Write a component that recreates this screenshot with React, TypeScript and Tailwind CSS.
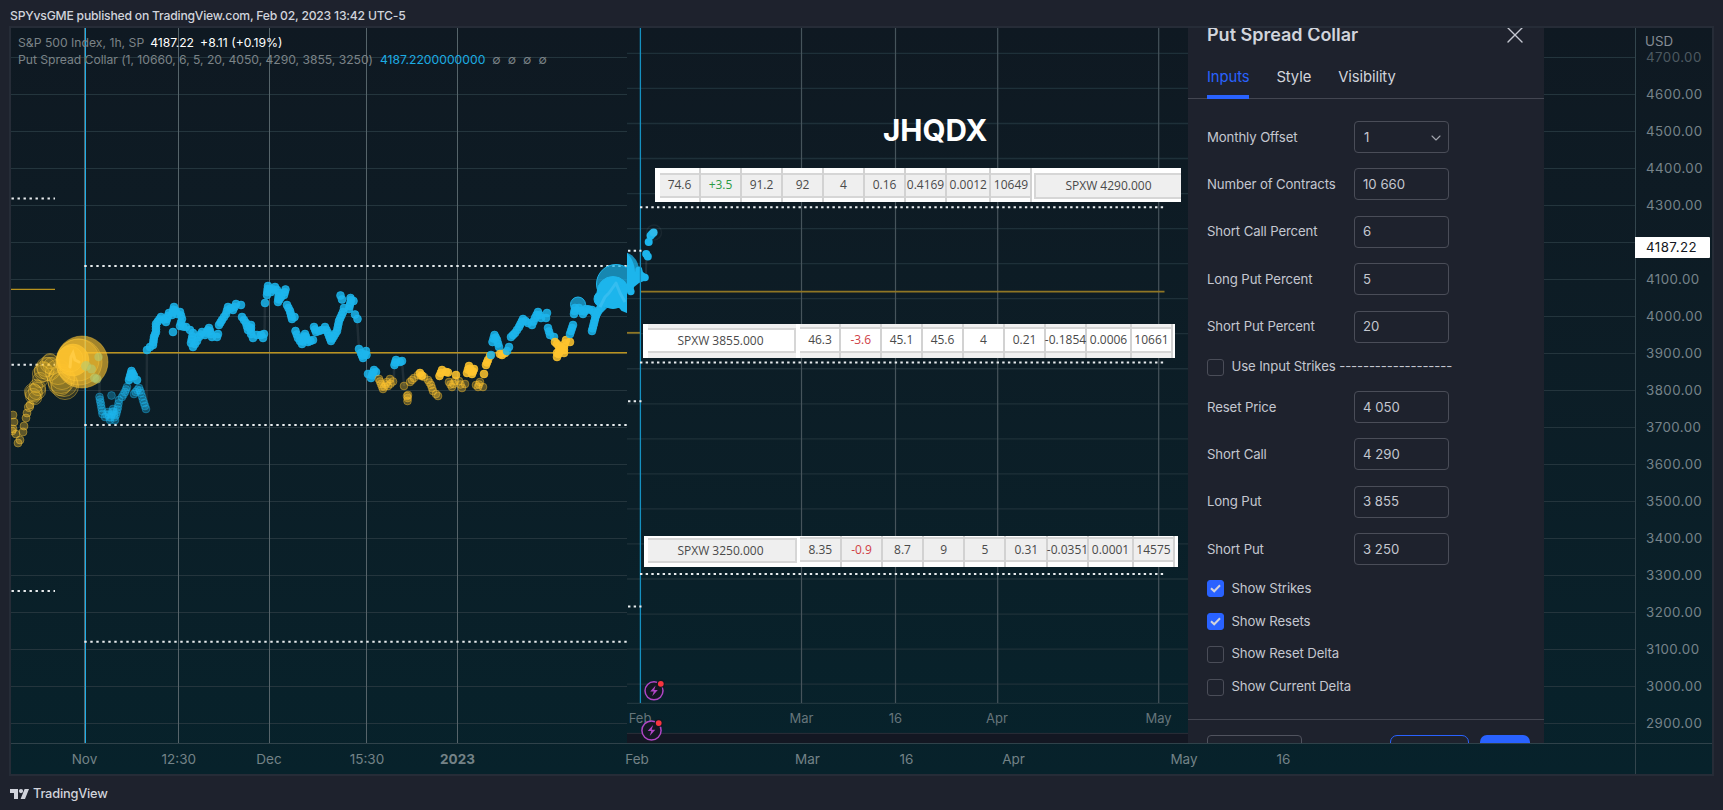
import React from 'react';
import { FiX, FiChevronDown } from 'react-icons/fi';

type Point = [number, number];
type Tone = 'blue' | 'gold';

interface Run {
  tone: Tone;
  dim?: boolean;
  points: Point[];
}

interface StrikeCell {
  value: string;
  width: string;
  color?: string;
}

const TONES: Record<Tone, string> = { blue: '#1cb5ec', gold: '#ffc42e' };

const RUNS: Run[] = [
  { tone: 'blue', dim: true, points: [[99.5, 397], [101, 405], [102.5, 414], [105, 417], [108, 412], [110, 420], [113, 409], [115, 420], [116, 415], [118, 407], [119, 400], [122, 397], [125, 392], [127, 387]] },
  { tone: 'blue', dim: true, points: [[111.5, 395.5]] },
  { tone: 'blue', points: [[129, 380], [131.5, 371], [134, 376], [137, 380]] },
  { tone: 'blue', dim: true, points: [[134, 394], [139, 388], [141, 393], [143, 400], [145, 406], [146, 409]] },
  { tone: 'blue', points: [[147, 350], [150, 347], [153, 345], [154, 337], [156, 332], [156, 324], [161, 317], [166, 322], [169, 313], [172, 315], [174, 307], [177, 314], [180, 312], [182, 319], [180, 326], [186, 327], [190, 330], [193, 333], [191, 343], [193, 347], [197, 341], [199, 337], [202, 332], [205, 335], [209, 328], [212, 337], [217, 337], [218, 334]] },
  { tone: 'blue', points: [[173, 332]] },
  { tone: 'blue', points: [[219, 325], [222, 320], [226, 314], [228, 307], [233, 310], [236, 304], [241, 305]] },
  { tone: 'blue', points: [[242, 317], [246, 323], [248, 330], [251, 325], [251, 334], [253, 338], [257, 335], [261, 335], [263, 338], [264, 334]] },
  { tone: 'blue', points: [[265, 303]] },
  { tone: 'blue', points: [[267, 295], [268, 286], [271, 292], [275, 287], [279, 293], [278, 302], [281, 297], [284, 295], [285.5, 289.5]] },
  { tone: 'blue', points: [[287, 305], [290, 311], [292, 319], [294.5, 317]] },
  { tone: 'blue', points: [[295.5, 331], [298, 338], [302, 344], [305, 334], [308, 342], [313, 340]] },
  { tone: 'blue', points: [[314, 327], [316, 332], [322, 330], [325, 327], [328, 333], [331, 341], [337, 331], [339, 321], [343, 312], [344, 308], [349, 309], [351, 300]] },
  { tone: 'blue', points: [[340.5, 295.5], [342, 299.5]] },
  { tone: 'blue', points: [[350.5, 298], [353.5, 301]] },
  { tone: 'blue', points: [[355, 314.5], [357.5, 319]] },
  { tone: 'blue', points: [[359, 349], [361, 353], [363, 358], [366, 351], [366.5, 355]] },
  { tone: 'blue', points: [[368, 374], [371, 378], [374, 370], [376, 372]] },
  { tone: 'gold', dim: true, points: [[379, 379], [381, 384], [383, 389], [387, 382], [390, 379], [393, 381.5], [388, 386]] },
  { tone: 'blue', points: [[394.5, 365], [396, 360], [400, 362], [402, 361]] },
  { tone: 'gold', dim: true, points: [[404, 386]] },
  { tone: 'gold', dim: true, points: [[407, 396], [408, 395], [407.5, 401]] },
  { tone: 'gold', dim: true, points: [[410, 382], [414, 378], [418, 375], [424, 377], [428, 380], [431, 385], [433, 391], [436, 394], [438, 396]] },
  { tone: 'gold', points: [[420, 373], [422, 375.5]] },
  { tone: 'gold', points: [[439.5, 376], [442, 370], [446, 372], [448, 372.5]] },
  { tone: 'gold', dim: true, points: [[449, 382], [452, 387], [455, 381], [459, 381], [462, 388], [465, 384]] },
  { tone: 'gold', points: [[456, 375]] },
  { tone: 'gold', points: [[467, 373], [469, 366], [472, 374], [474, 369]] },
  { tone: 'gold', dim: true, points: [[476, 385], [480, 382], [478, 387], [483, 387]] },
  { tone: 'gold', points: [[484, 374]] },
  { tone: 'gold', points: [[486, 365], [488, 360], [490, 356]] },
  { tone: 'blue', points: [[491, 355]] },
  { tone: 'blue', points: [[492.5, 342], [494.5, 335], [497, 340], [499, 347]] },
  { tone: 'gold', points: [[500, 354], [502, 355], [505, 353]] },
  { tone: 'blue', points: [[507, 351], [509, 347]] },
  { tone: 'blue', points: [[511, 337], [515, 333], [519, 327], [523, 319], [528, 323], [532, 325], [535, 318], [538, 312], [541, 318], [546, 318], [547, 313]] },
  { tone: 'blue', points: [[548, 328], [550, 335], [554, 337]] },
  { tone: 'gold', points: [[555, 342], [561, 348], [557, 353], [557, 357], [560, 351], [564, 353], [564, 347], [566, 340], [570, 342]] },
  { tone: 'blue', points: [[570, 334], [573, 325]] },
  { tone: 'blue', points: [[574, 314], [575, 308], [579, 308], [583, 314], [586, 309], [592, 310], [596, 315]] },
  { tone: 'blue', points: [[592, 331], [594, 323], [596, 315], [599, 310], [603, 306]] },
];

// [cx, cy, r] of the October bubbles that grow towards the reset
const GOLD_BUBBLES: [number, number, number][] = [
  [13, 415, 4.4], [14, 422, 4.4], [12, 431, 4.4], [13, 429, 4.4], [16, 434, 4.4], [18, 443, 4.4], [20, 440, 4.4], [23, 432, 4.4], [24, 426, 4.4],
  [26, 418, 4.4], [27, 413, 4.4], [29, 407, 5], [30, 405, 4.4], [33, 396, 8], [34, 393, 9], [37, 391, 9], [38, 388, 8], [36, 386, 7],
  [35, 398, 7], [33, 392, 9], [40, 380, 8], [41, 374, 9], [43, 370, 9], [44, 372, 10], [46, 367, 10], [50, 361, 8], [50, 364, 10], [49, 369, 12],
  [52, 366, 9], [58, 372, 13], [61, 380, 14], [64, 383, 14], [65, 386, 14], [62, 377, 13], [60, 384, 12],
];

const HORIZONTAL = Array.from({ length: 19 }, (_, i) => 57.5 + i * 37);
const INSET_HORIZONTAL = Array.from({ length: 19 }, (_, i) => 53.4 + i * 35.04);
const PRICES = Array.from({ length: 19 }, (_, i) => `${4700 - i * 100}.00`);

// Fills the gaps between two samples so that a run reads as a bead chain
const densify = (points: Point[]): Point[] => {
  const out: Point[] = [];
  points.forEach(([x, y], i) => {
    out.push([x, y]);
    const next = points[i + 1];
    if (!next) return;
    const steps = Math.floor(Math.hypot(next[0] - x, next[1] - y) / 2.6);
    for (let s = 1; s < steps; s++) {
      out.push([x + ((next[0] - x) * s) / steps, y + ((next[1] - y) * s) / steps]);
    }
  });
  return out;
};

const DottedLine: React.FC<{ x1: number; x2: number; y: number; step?: number }> = ({ x1, x2, y, step = 6 }) => (
  <line x1={x1} x2={x2} y1={y} y2={y} stroke="#e9edef" strokeWidth={2} strokeDasharray={`2.4 ${step - 2.4}`} />
);

const Beads: React.FC<{ run: Run }> = ({ run }) => (
  <g fill={TONES[run.tone]} stroke={TONES[run.tone]}>
    {densify(run.points).map(([x, y], i) => (
      <circle
        key={i}
        cx={x}
        cy={y}
        r={3.9}
        fillOpacity={run.dim ? 0.34 : 0.85}
        strokeOpacity={run.dim ? 0.4 : 0.7}
        strokeWidth={1}
      />
    ))}
  </g>
);

const MainChart: React.FC = () => (
  <svg className="absolute inset-0 h-full w-full" viewBox="11 28 1624 715">
    <g stroke="#24353d" strokeWidth={1}>
      {HORIZONTAL.map((y) => <line key={y} x1={11} x2={1635} y1={y} y2={y} />)}
    </g>
    <g stroke="#56646a" strokeWidth={1}>
      {[84.5, 178.5, 269.5, 366.5, 457.5].map((x) => <line key={x} x1={x} x2={x} y1={28} y2={743} />)}
    </g>
    <line x1={85.5} x2={85.5} y1={28} y2={743} stroke="#1eaee6" />

    <g stroke="#ffffff" strokeOpacity={0.08} strokeWidth={2.5}>
      <line x1={99.5} x2={99.5} y1={357} y2={397} />
      <line x1={146.5} x2={147} y1={409} y2={350} />
      <line x1={264.5} x2={265} y1={334} y2={303} />
      <line x1={357} x2={359} y1={319} y2={349} />
      <line x1={402} x2={404} y1={361} y2={386} />
      <line x1={394} x2={394} y1={382} y2={365} />
    </g>

    <g stroke="#b9921f" strokeWidth={1.4}>
      <line x1={11} x2={55} y1={289.4} y2={289.4} />
      <line x1={85} x2={627} y1={352.7} y2={352.7} />
    </g>
    <DottedLine x1={11.5} x2={55} y={198.5} />
    <DottedLine x1={11.5} x2={55} y={364.7} />
    <DottedLine x1={11.5} x2={55} y={591} />
    <DottedLine x1={84.3} x2={627} y={266} />
    <DottedLine x1={84.3} x2={627} y={425} />
    <DottedLine x1={84.3} x2={627} y={641.7} />

    <g fill="#ffc42e" stroke="#ffca3a" strokeOpacity={0.4} strokeWidth={1}>
      {GOLD_BUBBLES.map(([x, y, r], i) => (
        <circle key={i} cx={x} cy={y} r={r - 0.4} fillOpacity={r > 6 ? 0.14 : 0.34} />
      ))}
      <circle cx={82} cy={362} r={26} fillOpacity={0.62} />
      <circle cx={79} cy={362} r={23} fillOpacity={0.3} />
      <circle cx={78} cy={360} r={21} fillOpacity={0.3} />
      <circle cx={73} cy={360} r={16} fillOpacity={0.75} />
      <circle cx={70} cy={359} r={13} fillOpacity={0.4} />
    </g>
    <path d="M70 367L71 357L73 353L75 360L79 362" fill="none" stroke="#ffcb42" strokeWidth={3} strokeLinecap="round" />
    <g fill="#b4cb72" fillOpacity={0.6}>
      <circle cx={98.5} cy={357} r={4.2} />
      <circle cx={86} cy={366} r={5} />
      <circle cx={91.5} cy={369} r={4.5} />
      <circle cx={94.5} cy={378} r={4.5} />
      <circle cx={97} cy={379} r={4.5} />
    </g>

    {RUNS.map((run, i) => <Beads key={i} run={run} />)}

    <g fill="#1cb5ec" stroke="#1cb5ec">
      <circle cx={578} cy={304.5} r={7.5} fillOpacity={0.7} />
      <circle cx={616} cy={284} r={19.5} fillOpacity={0.7} />
      <circle cx={613} cy={292.5} r={16} />
      <circle cx={602} cy={299} r={8} />
      <circle cx={621} cy={300} r={8} />
      <path d="M610 290L627 285V312L622 310L617 303L606 306Z" strokeWidth={2} />
    </g>
    <path d="M600 307L605 297L609 293L616 283L620 293L625 302" fill="none" stroke="#35bdf0" strokeWidth={3} strokeLinejoin="round" />
  </svg>
);

const LightningBadge: React.FC<{ x: number; y: number; r: number }> = ({ x, y, r }) => (
  <g>
    <circle cx={x} cy={y} r={r - 1} fill="#131722" stroke="#b046c6" strokeWidth={1.5} />
    <path
      d={`M${x + 1.6} ${y - 5.4}L${x - 3.8} ${y + 0.6}H${x - 0.2}L${x - 1.8} ${y + 5.4}L${x + 3.8} ${y - 0.8}H${x + 0.2}Z`}
      fill="#b046c6"
    />
    <circle cx={x + r * 0.68} cy={y - r * 0.7} r={4} fill="#131722" />
    <circle cx={x + r * 0.68} cy={y - r * 0.7} r={2.9} fill="#f7353f" />
  </g>
);

const InsetChart: React.FC = () => (
  <svg className="absolute inset-0 h-full w-full" viewBox="627 28 561 715">
    <g stroke="#1e3039" strokeWidth={1.3}>
      {INSET_HORIZONTAL.map((y) => <line key={y} x1={627} x2={1188} y1={y} y2={y} />)}
      <line x1={627} x2={1188} y1={703.3} y2={703.3} stroke="#20363e" />
    </g>
    <g stroke="#46545b" strokeWidth={1.2}>
      {[801.5, 895.5, 997.7, 1158.7].map((x) => <line key={x} x1={x} x2={x} y1={28} y2={703} />)}
    </g>
    <rect x={627} y={733} width={561} height={10} fill="#131722" />
    <line x1={627} x2={1188} y1={733.4} y2={733.4} stroke="#2a2e39" />

    <g stroke="#8f7624" strokeWidth={1.8}>
      <line x1={640} x2={1164.5} y1={291.7} y2={291.7} />
      <line x1={627} x2={641} y1={332.8} y2={332.8} />
    </g>

    <line x1={646} x2={646.5} y1={276} y2={250} stroke="#ffffff" strokeOpacity={0.09} strokeWidth={2} />
    <g fill="#1cb5ec">
      <circle cx={620.5} cy={270} r={18.5} fillOpacity={0.75} />
      <path d="M627 253C633 259 635 267 635 272L638 267L641 267L643 272L647 275L648 279L644 281L639 283L634 287L633 294L630 295L627 291Z" />
      <circle cx={630.8} cy={291.5} r={3.8} />
      <circle cx={638.8} cy={270} r={3.5} />
      <circle cx={645} cy={277.5} r={3.8} />
      <circle cx={646.2} cy={254} r={4} />
      <circle cx={647.8} cy={256.5} r={4} />
      <circle cx={648.7} cy={242} r={4} />
      <circle cx={650.5} cy={235.7} r={4} />
      <circle cx={652} cy={234} r={4} />
      <circle cx={653.6} cy={232.5} r={4} fill="#2fb9ea" />
    </g>
    <circle cx={654} cy={232.5} r={7.5} fill="none" stroke="#ffffff" strokeOpacity={0.05} strokeWidth={1.5} />
    <line x1={640.4} x2={640.4} y1={28} y2={703} stroke="#1590c0" strokeWidth={1.3} />

    <DottedLine x1={628} x2={641.5} y={250.7} step={5.66} />
    <DottedLine x1={628} x2={641.5} y={401.2} step={5.66} />
    <DottedLine x1={628} x2={641.5} y={606.5} step={5.66} />
    <DottedLine x1={640} x2={1165} y={207.3} step={5.66} />
    <DottedLine x1={640} x2={1165} y={362.6} step={5.66} />
    <DottedLine x1={640} x2={1165} y={574} step={5.66} />

    <g className="text-[13px]" fill="#66757b" textAnchor="middle">
      <text x={640} y={722.5}>Feb</text>
      <text x={801.5} y={722.5}>Mar</text>
      <text x={895.5} y={722.5}>16</text>
      <text x={997} y={722.5}>Apr</text>
      <text x={1158.5} y={722.5}>May</text>
    </g>
    <LightningBadge x={654} y={690.8} r={10} />
    <LightningBadge x={651.5} y={730.5} r={10.6} />
  </svg>
);

const UPPER_CELLS: StrikeCell[] = [
  { value: '74.6', width: 'w-[41px]' },
  { value: '+3.5', width: 'w-[41px]', color: 'text-[#2c9a45]' },
  { value: '91.2', width: 'w-[41px]' },
  { value: '92', width: 'w-[41px]' },
  { value: '4', width: 'w-[41px]' },
  { value: '0.16', width: 'w-[41px]' },
  { value: '0.4169', width: 'w-[41px]' },
  { value: '0.0012', width: 'w-[44.5px]' },
  { value: '10649', width: 'w-[41px]' },
];

const MIDDLE_CELLS: StrikeCell[] = [
  { value: '46.3', width: 'w-[41px]' },
  { value: '-3.6', width: 'w-[40.5px]', color: 'text-[#cf4146]' },
  { value: '45.1', width: 'w-[41px]' },
  { value: '45.6', width: 'w-[41px]' },
  { value: '4', width: 'w-[41px]' },
  { value: '0.21', width: 'w-[41px]' },
  { value: '-0.1854', width: 'w-[41px]' },
  { value: '0.0006', width: 'w-[45px]' },
  { value: '10661', width: 'w-[41px]' },
];

const LOWER_CELLS: StrikeCell[] = [
  { value: '8.35', width: 'w-[41.5px]' },
  { value: '-0.9', width: 'w-[41px]', color: 'text-[#cf4146]' },
  { value: '8.7', width: 'w-[41px]' },
  { value: '9', width: 'w-[41.5px]' },
  { value: '5', width: 'w-[41px]' },
  { value: '0.31', width: 'w-[41.5px]' },
  { value: '-0.0351', width: 'w-[41px]' },
  { value: '0.0001', width: 'w-[45px]' },
  { value: '14575', width: 'w-[41px]' },
];

const StrikeCells: React.FC<{ cells: StrikeCell[]; outer: string; inner: string; pad: string }> = ({ cells, outer, inner, pad }) => (
  <div className="flex h-full">
    {cells.map((cell) => (
      <div key={cell.value} className={`h-full shrink-0 border-r-2 border-[#d2d2d2] ${pad} ${outer} ${cell.width}`}>
        <div className={`flex h-full items-center justify-center border-y-2 border-[#d6d6d6] pl-px whitespace-nowrap ${inner} ${cell.color ?? ''}`}>
          {cell.value}
        </div>
      </div>
    ))}
  </div>
);

const StrikeName: React.FC<{ name: string; className: string }> = ({ name, className }) => (
  <div className={`flex items-center justify-center border-y-2 border-[#d6d6d6] ${className}`}>{name}</div>
);

const Inset: React.FC = () => (
  <div className="relative h-full w-[561px] shrink-0 overflow-hidden bg-linear-to-b from-[#0f1922] to-[#07222b]">
    <InsetChart />
    <div className="absolute left-[256px] top-[82px] text-[29.7px] leading-[40px] font-bold text-white">JHQDX</div>

    <div className="absolute left-[28px] top-[140px] flex h-[33.5px] w-[526px] bg-white pl-[4.5px] font-['Open_Sans',sans-serif] text-[12px] text-[#4a4a4a]">
      <StrikeCells cells={UPPER_CELLS} outer="bg-[#fdfdfd]" inner="bg-[#efefef]" pad="pt-[4.5px] pb-[4px]" />
      <StrikeName name="SPXW 4290.000" className="mt-[5px] mb-[3px] ml-[2px] grow border-l-2 bg-[#efefef]" />
    </div>

    <div className="absolute left-[16px] top-[296px] flex h-[34px] w-[532px] bg-[#f0f0f0] font-['Open_Sans',sans-serif] text-[12px] text-[#4a4a4a]">
      <div className="w-[5px] shrink-0 bg-white" />
      <StrikeName name="SPXW 3855.000" className="mt-[4px] mb-[5px] w-[148px] shrink-0 border-r-2 bg-white pr-px" />
      <div className="w-[4px] shrink-0 bg-white" />
      <StrikeCells cells={MIDDLE_CELLS} outer="bg-[#f0f0f0]" inner="bg-white" pad="pt-[3px] pb-[5px]" />
      <div className="grow bg-white" />
    </div>

    <div className="absolute left-[17px] top-[508px] flex h-[31px] w-[534px] bg-white font-['Open_Sans',sans-serif] text-[12px] text-[#4a4a4a]">
      <div className="w-[4px] shrink-0 bg-white" />
      <StrikeName name="SPXW 3250.000" className="mt-[2px] mb-[4px] w-[149px] shrink-0 border-r-2 bg-[#efefef] pr-0.5" />
      <div className="w-[3px] shrink-0 bg-white" />
      <StrikeCells cells={LOWER_CELLS} outer="bg-white" inner="bg-[#efefef]" pad="pt-[1px] pb-[5px]" />
    </div>
  </div>
);

const NumberField: React.FC<{ label: string; value: string; dropdown?: boolean }> = ({ label, value, dropdown }) => (
  <div className="flex h-8 items-center">
    <div className="w-[147px] pt-px tracking-[-0.12px]">{label}</div>
    <div className={`flex h-8 w-[95px] items-center justify-between rounded-[4px] border border-[#4a4d58] pt-px pr-1 ${dropdown ? 'pl-[9px]' : 'pl-2'}`}>
      <span>{value}</span>
      {dropdown && <FiChevronDown className="h-4 w-4 text-[#a3a6af]" strokeWidth={1.6} />}
    </div>
  </div>
);

const CheckField: React.FC<{ label: string; checked?: boolean }> = ({ label, checked }) => (
  <div className="flex h-[17.4px] items-center gap-[7.5px] tracking-[-0.12px] whitespace-nowrap">
    <div className={`flex h-[17px] w-[17px] shrink-0 items-center justify-center rounded-[3px] border ${checked ? 'border-[#2962ff] bg-[#2962ff]' : 'border-[#4a4d58]'}`}>
      {checked && (
        <svg className="h-[9px] w-[11px]" viewBox="0 0 11 9" fill="none" stroke="#d1d4dc" strokeWidth={2}>
          <path d="M1 4.2L4.2 7.3L10 1.3" />
        </svg>
      )}
    </div>
    <span>{label}</span>
  </div>
);

const SettingsPanel: React.FC = () => (
  <div className="h-full w-[356px] shrink-0 overflow-hidden bg-[#1e222d] text-[13.2px] text-[#c4c7d0]">
    <div className="flex h-[14px] items-center justify-between pl-[19px] pr-[15px]">
      <h2 className="text-[18px] font-semibold leading-[14px] text-[#d1d4dc]">Put Spread Collar</h2>
      <FiX className="h-[28px] w-[28px] text-[#c4c7d0]" strokeWidth={1.2} />
    </div>
    <div className="flex h-[57px] items-end gap-[27px] border-b border-[#434651] pl-[19px] text-[14.8px] tracking-[-0.1px] text-[#d1d4dc]">
      <div className="-mb-px flex h-[44px] items-center border-b-4 border-[#2962ff] pt-1 text-[#2962ff]">Inputs</div>
      <div className="flex h-[42px] items-center">Style</div>
      <div className="flex h-[42px] items-center">Visibility</div>
    </div>
    <div className="flex flex-col pl-[19px] pt-[22px]">
      <div className="flex flex-col gap-[15.4px]">
        <NumberField label="Monthly Offset" value="1" dropdown />
        <NumberField label="Number of Contracts" value="10 660" />
        <NumberField label="Short Call Percent" value="6" />
        <NumberField label="Long Put Percent" value="5" />
        <NumberField label="Short Put Percent" value="20" />
      </div>
      <div className="pt-[16px] pb-[15px]">
        <CheckField label="Use Input Strikes -------------------" />
      </div>
      <div className="flex flex-col gap-[15.4px]">
        <NumberField label="Reset Price" value="4 050" />
        <NumberField label="Short Call" value="4 290" />
        <NumberField label="Long Put" value="3 855" />
        <NumberField label="Short Put" value="3 250" />
      </div>
      <div className="flex flex-col gap-[15.4px] pt-[15px]">
        <CheckField label="Show Strikes" checked />
        <CheckField label="Show Resets" checked />
        <CheckField label="Show Reset Delta" />
        <CheckField label="Show Current Delta" />
      </div>
    </div>
    <div className="mt-[23px] flex border-t border-[#434651] pl-[19px] pt-[15px]">
      <div className="h-9 w-[95px] rounded-[4px] border border-[#50535e]" />
      <div className="ml-[88px] h-9 w-[79px] rounded-[7px] border border-[#2962ff]" />
      <div className="ml-[11px] h-9 w-[50px] rounded-[7px] bg-[#2962ff]" />
    </div>
  </div>
);

const PriceAxis: React.FC = () => (
  <div className="relative w-[77px] shrink-0 border-l border-[#33454d] pl-[10px] pt-[11px] text-[13.3px] tracking-[0.45px] text-[#76838a]">
    {PRICES.map((price, i) => (
      <div key={price} className={`flex h-[37px] items-center ${i === 0 ? 'opacity-60' : ''} ${i === 5 ? 'invisible' : ''}`}>
        {price}
      </div>
    ))}
    <div className="absolute left-[9px] top-[3px] text-[13.3px] leading-5 tracking-normal text-[#868c94]">USD</div>
    <div className="absolute -left-px top-[209px] flex h-[21px] w-[75px] items-center rounded-r-[1px] bg-white pl-[11px] text-[#131722]">4187.22</div>
  </div>
);

const TimeAxis: React.FC = () => (
  <svg className="h-[31px] w-full shrink-0" viewBox="11 743 1701 31">
    <line x1={11} x2={1712} y1={743.5} y2={743.5} stroke="#2f424a" />
    <line x1={1635.5} x2={1635.5} y1={743} y2={774} stroke="#33454d" />
    <g className="text-[13.5px]" fill="#748287" textAnchor="middle">
      <text x={84.5} y={764}>Nov</text>
      <text x={178.8} y={764}>12:30</text>
      <text x={269} y={764}>Dec</text>
      <text x={367} y={764}>15:30</text>
      <text x={457.5} y={764} className="font-bold">2023</text>
      <text x={637} y={764}>Feb</text>
      <text x={807.5} y={764}>Mar</text>
      <text x={906.5} y={764}>16</text>
      <text x={1013.5} y={764}>Apr</text>
      <text x={1184} y={764}>May</text>
      <text x={1283.5} y={764}>16</text>
    </g>
  </svg>
);

const Legend: React.FC = () => (
  <div className="absolute left-[7px] top-[6px] text-[12.2px] leading-[17px] whitespace-nowrap text-[#7b8387]">
    <div className="flex gap-[6px]">
      <span>S&amp;P 500 Index, 1h, SP</span>
      <span className="text-white">4187.22</span>
      <span className="text-white">+8.11 (+0.19%)</span>
    </div>
    <div className="flex gap-[7px]">
      <span className="tracking-[-0.045px]">Put Spread Collar (1, 10660, 6, 5, 20, 4050, 4290, 3855, 3250)</span>
      <span className="text-[#1cacE3]">4187.2200000000</span>
      <span>∅</span>
      <span>∅</span>
      <span>∅</span>
      <span>∅</span>
    </div>
  </div>
);

const App: React.FC = () => (
  <div className="flex h-[810px] w-[1723px] flex-col overflow-hidden bg-[#1e222d] pl-[9px] font-['Inter','Liberation_Sans',sans-serif]">
    <header className="flex h-[26px] shrink-0 items-center pl-px pt-[6px] text-[12.2px] font-medium tracking-[-0.22px] text-[#d1d4dc]">
      <span>SPYvsGME published on TradingView.com, Feb 02, 2023 13:42 UTC-5</span>
    </header>
    <main className="flex h-[750px] w-[1705px] shrink-0 flex-col border-2 border-[#262c37] bg-linear-to-b from-[#0f1922] to-[#07222b]">
      <div className="flex h-[715px] shrink-0">
        <div className="relative flex w-[1624px] shrink-0 pl-[616px]">
          <MainChart />
          <Legend />
          <Inset />
          <div className="relative h-full">
            <SettingsPanel />
          </div>
        </div>
        <PriceAxis />
      </div>
      <TimeAxis />
    </main>
    <footer className="flex h-[34px] items-center gap-[4px] pl-px pt-px text-[12.8px] font-medium tracking-[-0.2px] text-[#d1d4dc]">
      <svg className="h-[10px] w-[19px]" viewBox="0 0 19 10" fill="currentColor">
        <path d="M0 0H8V10H4V4H0Z" />
        <circle cx={11} cy={2.1} r={2.1} />
        <path d="M14.6 0H19L15 10H10.6Z" />
      </svg>
      <span>TradingView</span>
    </footer>
  </div>
);

export default App;
